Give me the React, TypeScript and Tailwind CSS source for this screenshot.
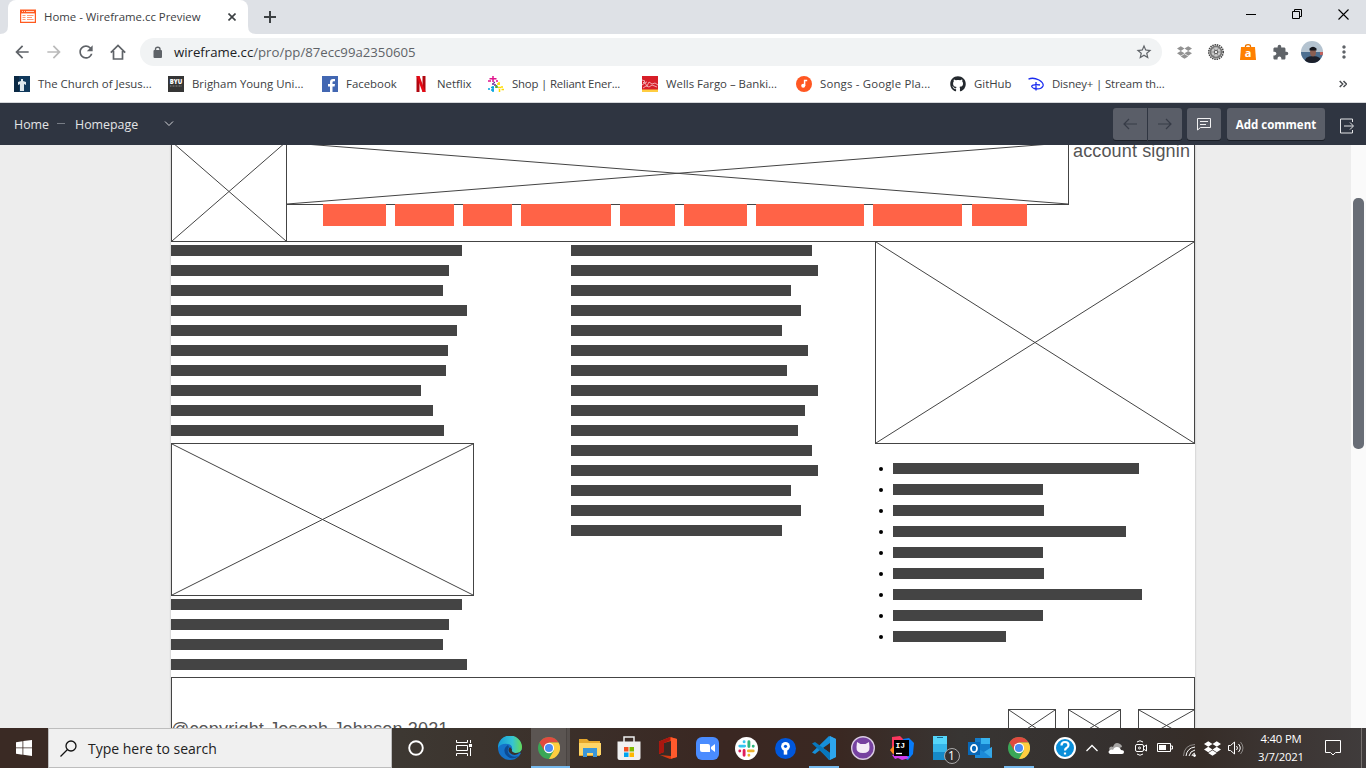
import React from "react";
import { FaDropbox, FaGithub } from "react-icons/fa";
import { MdArrowBack, MdArrowForward, MdRefresh, MdStarBorder, MdExtension, MdMoreVert } from "react-icons/md";

const UI = "font-['Open_Sans','Noto_Sans',sans-serif]";

function CrossBox({ className, top = 0 }: { className: string; top?: number }) {
  return (
    <div className={`border border-[#444] shrink-0 ${className}`}>
      <svg className="block w-full h-full" viewBox="0 0 100 100" preserveAspectRatio="none">
        <path d={`M0 ${top}L100 100M0 100L100 ${top}`} stroke="#444" strokeWidth="1" fill="none" vectorEffect="non-scaling-stroke" />
      </svg>
    </div>
  );
}

function Lines({ widths }: { widths: number[] }) {
  return (
    <div className="flex flex-col gap-[9px]">
      {widths.map((w, i) => (
        <div key={i} className="h-[11px] bg-[#444]" style={{ width: w }} />
      ))}
    </div>
  );
}

const firstLines = [291, 278, 272, 296, 286, 277, 275, 250, 262, 273];
const secondLines = [241, 247, 220, 230, 211, 237, 216, 247, 234, 227, 241, 247, 220, 230, 211];
const bullets = [246, 150, 151, 233, 150, 151, 249, 150, 113];
const nav = [[323, 386], [395, 454], [463, 512], [521, 611], [620, 675], [684, 747], [756, 864], [873, 962], [972, 1027]];

function Wireframe() {
  return (
    <div className="flex h-[583px] bg-[#ededed] overflow-hidden">
      <div className="w-[171px] shrink-0" />
      <div className="w-[1024px] h-[583px] shrink-0 bg-white overflow-hidden shadow-[0_0_2px_rgba(0,0,0,0.25)] font-['Liberation_Sans',Arial,sans-serif] text-[18px] text-[#555]">
        <div className="-mt-1 h-[101px] border-x border-b border-[#444] flex">
          <CrossBox className="-ml-px w-[116px] h-[101px]" />
          <div className="w-[782px] shrink-0">
            <CrossBox className="-ml-px w-[783px] h-[64px]" top={1} />
            <div className="flex pl-[36px] -mt-px">
              {nav.map(([a, b], i) => (
                <div key={i} className="h-[22px] bg-[#ff6347] shrink-0 relative" style={{ width: b - a, marginLeft: i ? a - nav[i - 1][1] : 0 }} />
              ))}
            </div>
          </div>
          <div className="pl-1 whitespace-nowrap leading-[20px] tracking-[0.14px]">account signin</div>
        </div>
        <div className="flex h-[435px]">
          <div className="w-[400px] pt-[3px]">
            <Lines widths={firstLines} />
            <CrossBox className="w-[303px] h-[153px] mt-[7px] mb-[3px]" />
            <Lines widths={firstLines.slice(0, 4)} />
          </div>
          <div className="w-[304px] pt-[3px]"><Lines widths={secondLines} /></div>
          <div className="w-[320px]">
            <CrossBox className="-mt-px w-[320px] h-[203px]" />
            <ul className="mt-[19px] pl-[4px] flex flex-col gap-[10px]">
              {bullets.map((w, i) => (
                <li key={i} className="flex items-center gap-[10px] h-[11px]">
                  <span className="size-[4px] mt-px rounded-full bg-black" />
                  <span className="h-[11px] bg-[#444]" style={{ width: w }} />
                </li>
              ))}
            </ul>
          </div>
        </div>
        <div className="h-[100px] border border-[#444] flex items-start">
          <div className="w-[836px] pt-[41px] leading-[20px] whitespace-nowrap tracking-[0.17px] -indent-px">@copyright Joseph Johnson 2021</div>
          <div className="flex pt-[31px] -mr-px">
            <CrossBox className="w-[48px] h-[33px] mr-3" />
            <CrossBox className="w-[53px] h-[33px] mr-[17px]" />
            <CrossBox className="w-[57px] h-[33px]" />
          </div>
        </div>
      </div>
      <div className="w-[156px] shrink-0" />
      <div className="w-[15px] bg-[#fafafa] shrink-0 pl-[2px] pt-[53px]">
        <div className="w-[11px] h-[251px] rounded-[5px] bg-[#686d76]" />
      </div>
    </div>
  );
}

function TabStrip() {
  return (
    <div className="h-[34px] bg-[#dee1e6] flex items-end">
      <svg width="8" height="8"><path d="M0 8Q8 8 8 0V8Z" fill="#fff" /></svg>
      <div className="w-[240px] h-[34px] bg-white rounded-t-[8px] flex items-center pl-3">
        <svg width="16" height="16" viewBox="0 0 16 16">
          <path d="M.6 1h14.800v12.400H.6Z" fill="#fff" stroke="#ff5a1f" strokeWidth="1.200" />
          <path d="M0 1h16v3.400H0Z" fill="#ff5a1f" />
          <path d="M2 2.500h1M4 2.500h1M6 2.500h8" stroke="#ffd5c5" />
          <path d="M2.500 6.500h3M7 6.500h6.500M2.500 8.500h3M7 8.500h5M2.500 10.500h3M7 10.500h6.500" stroke="#ff9c77" />
        </svg>
        <span className="ml-2 w-[157px] whitespace-nowrap text-[11.400px] text-[#3c4043]">Home - Wireframe.cc Preview</span>
        <svg className="ml-[27px]" width="8" height="8"><path d="M.5.5l7 7M7.500.5l-7 7" stroke="#3c4043" strokeWidth="1.600" /></svg>
      </div>
      <svg width="8" height="8"><path d="M8 8Q0 8 0 0V8Z" fill="#fff" /></svg>
      <svg className="ml-2 mb-[11px]" width="12" height="12"><path d="M6 0v12M0 6h12" stroke="#3c4043" strokeWidth="2" /></svg>
      <svg className="ml-auto mb-[14px]" width="10" height="10"><path d="M0 4.500h10" stroke="#000" /></svg>
      <svg className="ml-9 mb-[14px]" width="11" height="11" fill="none" stroke="#000"><path d="M.5 2.500h7v7h-7zM2.500 2V.5h7v7H8" /></svg>
      <svg className="ml-[35px] mb-[14px] mr-[17px]" width="11" height="11"><path d="M.5.5l10 10M10.500.5l-10 10" stroke="#000" strokeWidth="1.100" /></svg>
    </div>
  );
}

function Toolbar() {
  return (
    <div className="h-[36px] flex items-center text-[#5f6368] pl-3">
      <MdArrowBack size={20} />
      <MdArrowForward size={20} className="ml-3 text-[#bababa]" />
      <MdRefresh size={20} className="ml-3" />
      <svg className="ml-[14px] mr-[3px]" width="16" height="16" fill="none" stroke="currentColor" strokeWidth="1.700"><path d="M.8 8.700L8 1.500l7.200 7.200M3.500 7v8h9V7" /></svg>
      <div className="ml-[11px] w-[1022px] h-7 rounded-full bg-[#f1f3f4] flex items-center pl-[13px]">
        <svg width="10" height="13" fill="none"><rect x=".5" y="4" width="8.500" height="8" rx="1" fill="#5f6368" /><path d="M2.500 5V3.200q0-2 2.250-2t2.250 2V5" stroke="#5f6368" strokeWidth="1.400" /></svg>
        <span className="ml-[11px] mt-px text-[13.200px] whitespace-nowrap"><span className="text-[#202124]">wireframe.cc</span>/pro/pp/87ecc99a2350605</span>
        <MdStarBorder size={18} className="ml-auto mr-[9px]" />
      </div>
      <FaDropbox size={15} className="ml-[15px] text-[#929292]" />
      <svg className="ml-4" width="16" height="16" viewBox="0 0 16 16" fill="none">
        <circle cx="8" cy="8" r="7.200" stroke="#444" strokeWidth="1.600" strokeDasharray="1.500 .8" />
        <circle cx="8" cy="8" r="5.600" fill="#ccc" stroke="#777" strokeWidth="1.800" />
        <path d="M3 8h10M5.500 4l5 8M10.500 4l-5 8" stroke="#888" strokeWidth=".8" />
        <circle cx="8" cy="8" r="1.800" fill="#eee" stroke="#555" />
      </svg>
      <svg className="ml-4" width="16" height="16" viewBox="0 0 16 16">
        <path d="M5.500 4V2.200q0-1.500 2.500-1.500t2.500 1.500V4" fill="none" stroke="#e87400" strokeWidth="1.300" />
        <path d="M1 3h14l1 13H0Z" fill="#ff8000" />
        <text x="8" y="12.700" textAnchor="middle" fontSize="11" fontWeight="700" fill="#fff">a</text>
      </svg>
      <MdExtension size={17} className="ml-4" />
      <svg className="ml-3" width="22" height="22" viewBox="0 0 22 22">
        <defs><clipPath id="avatar"><circle cx="11" cy="11" r="11" /></clipPath></defs>
        <g clipPath="url(#avatar)">
          <path d="M0 0h22v22H0z" fill="#b4c3d0" /><path d="M0 11h22v11H0z" fill="#4d6f91" />
          <path d="M4 22q-1-7 8-7t8 7" fill="#1c202b" /><ellipse cx="12" cy="11.500" rx="3" ry="4" fill="#8b5f52" />
          <path d="M8.500 9.500V7.500q3.500-3.500 7 0V9.500z" fill="#14151b" /><path d="M19 11h3v3h-3z" fill="#c4605b" />
        </g>
      </svg>
      <MdMoreVert size={20} className="ml-[11px]" />
    </div>
  );
}

function Mark({ label, icon, className }: { label: string; icon: React.ReactNode; className: string }) {
  return (
    <div className={`flex items-center shrink-0 ${className}`}>
      <svg width="16" height="16" viewBox="0 0 16 16" className="shrink-0">{icon}</svg>
      <span className="ml-2 whitespace-nowrap">{label}</span>
    </div>
  );
}

function Bookmarks() {
  return (
    <div className="h-[33px] border-b border-[#d5d7da] flex items-center pl-[14px] pb-[4px] text-[11.400px] leading-[16px] text-[#3c4043]">
      <Mark className="w-[154px]" label="The Church of Jesus..." icon={<><path d="M0 0h16v16H0z" fill="#11395c" /><path d="M0 0h5v16H0z" fill="#0b2944" /><path d="M7 3h2v2l3 1v3l-2-1v7H6V8L4 9V6l3-1z" fill="#dfe8ee" /></>} />
      <Mark className="w-[154px]" label="Brigham Young Uni..." icon={<><path d="M0 0h16v16H0z" fill="#353535" /><text x="8" y="8" textAnchor="middle" fontSize="6" fontWeight="800" fill="#fff">BYU</text><path d="M2 10h12" stroke="#888" strokeDasharray="1 .5" /></>} />
      <Mark className="w-[91px]" label="Facebook" icon={<><path d="M0 0h16v16H0z" fill="#4267b2" /><path d="M8 16v-5.500H6V8h2V6q0-3 3-3h2v2.300h-1.300q-1.200 0-1.200 1.200V8H13l-.4 2.500h-2.100V16z" fill="#fff" /></>} />
      <Mark className="w-[75px]" label="Netflix" icon={<><path d="M3.500 0h3v16h-3zM9.500 0h3v16h-3z" fill="#b1060f" /><path d="M3.500 0h3l6 16h-3z" fill="#e50914" /></>} />
      <Mark className="w-[154px] tracking-[-0.18px]" label="Shop | Reliant Ener..." icon={<g strokeWidth="1.500"><path d="M5 0v6M1.500 2.700h7M0 5h3M8 5h2" stroke="#e0148c" /><path d="M4 8h2M5.500 6.500h1.500M6 9h2" stroke="#6a2a9b" /><path d="M0 13h2M3 11.500h3M3 14h3M5 10v6" stroke="#00a3e0" /><path d="M11 6v3M9 8h3M10 11.500h3M13.500 13.500H16M11.500 13v3M14 10v2" stroke="#ffdc00" /><path d="M7 11h3M8.500 9v3" stroke="#56ab3d" /></g>} />
      <Mark className="w-[154px]" label="Wells Fargo – Banki..." icon={<><path d="M0 0h16v16H0z" fill="#d71e28" /><path d="M0 13.500h16V16H0z" fill="#ffcd41" /><path d="M0 4l3 1-2 2 4-1M0 9l3-2 2 3 2-4 3 2 3-1 3 2M1 12l3-2 3 1 3-2 5 2" stroke="#f6c8ca" fill="none" strokeWidth=".8" /></>} />
      <Mark className="w-[154px] tracking-[0.18px]" label="Songs - Google Pla..." icon={<><circle cx="8" cy="8" r="8" fill="#ff5722" /><circle cx="7.200" cy="9.800" r="2" fill="#fff" /><path d="M8.600 10V4.500h2.600" stroke="#fff" strokeWidth="1.500" fill="none" /></>} />
      <div className="flex items-center w-[78px]"><FaGithub size={16} color="#24292e" /><span className="ml-2">GitHub</span></div>
      <Mark className="tracking-[-0.14px]" label="Disney+ | Stream th..." icon={<path d="M.5 3.200Q5 1 11 4Q16 7 15 10Q13 14 6 12.500Q2 10.500 5 9.200Q8 8.300 12 9M8 6v8.500" stroke="#1a2cf0" strokeWidth="1.300" fill="none" />} />
      <svg className="ml-auto mr-[19px]" width="8" height="8" fill="none" stroke="#4a4d51" strokeWidth="1.500"><path d="M.7 1l3 3-3 3M4.500 1l3 3-3 3" /></svg>
    </div>
  );
}

function PreviewBar() {
  const btn = "h-[32px] bg-[#5a5e68] flex items-center justify-center shadow-[0_1px_0_#1b1f27]";
  return (
    <div className="h-[42px] bg-[#2f3541] flex items-center pl-[14px] text-[12.400px] text-[#e3e4e6]">
      <span className="w-[35px] mt-[2px] whitespace-nowrap">Home</span>
      <span className="ml-2 mb-[2px] w-2 h-px bg-[#777c85]" />
      <span className="ml-[10px] mt-[2px] w-[64px] whitespace-nowrap">Homepage</span>
      <svg className="ml-[25px]" width="10" height="6" fill="none" stroke="#d5d6d9"><path d="M1 .5l4 4 4-4" /></svg>
      <div className={`${btn} ml-auto w-[34px] rounded-l-[3px]`}><svg width="14" height="12" fill="none" stroke="#373c47" strokeWidth="1.200"><path d="M14 6H1M6 1L1 6l5 5" /></svg></div>
      <div className={`${btn} ml-px w-[34px] rounded-r-[3px]`}><svg width="14" height="12" fill="none" stroke="#373c47" strokeWidth="1.200"><path d="M0 6h13M8 1l5 5-5 5" /></svg></div>
      <div className={`${btn} ml-[5px] w-[34px] rounded-[3px]`}><svg width="14" height="14" fill="none" stroke="#f1f1f2"><path d="M.5 1.500h13v9h-10l-3 2.500zM3 4.500h8M3 7.500h6" /></svg></div>
      <div className={`${btn} ml-[6px] w-[98px] pt-[2px] rounded-[3px] font-bold text-white text-[11.500px] whitespace-nowrap`}>Add comment</div>
      <svg className="ml-[15px] mr-[12px] mt-[3px]" width="14" height="16" fill="none" stroke="#e3e4e6"><path d="M12.500 4V1H.5v14h12v-3M4 8h9M10 4.500L13.500 8 10 11.500" /></svg>
    </div>
  );
}

const Chrome = () => (
  <svg width="22" height="22" viewBox="0 0 24 24">
    <circle cx="12" cy="12" r="12" fill="#3aa757" />
    <path d="M12 12L1.600 6A12 12 0 0 1 22.400 6H12z" fill="#e04a3f" />
    <path d="M12 6h10.400A12 12 0 0 1 12 24l5.200-9z" fill="#ffcd40" />
    <path d="M1.600 6L7 15l5-3V6z" fill="#e04a3f" />
    <circle cx="12" cy="12" r="5.600" fill="#fff" /><circle cx="12" cy="12" r="4.400" fill="#4c8bf5" />
  </svg>
);

function App24({ children, size = 24 }: { children: React.ReactNode; size?: number }) {
  return <svg width={size} height={size} viewBox="0 0 24 24">{children}</svg>;
}

function Slot({ children, active, underline }: { children: React.ReactNode; active?: boolean; underline?: boolean }) {
  return (
    <div className={`w-[39px] h-[40px] shrink-0 flex flex-col items-center ${active ? "ml-[2px] mr-[0.5px] bg-[linear-gradient(90deg,#5b5552_35px,#3d3836_35px,#56504d_36px)]" : ""}`}>
      <div className={`h-[38px] pt-[2px] flex items-center justify-center ${active ? "pr-[3px]" : ""}`}>{children}</div>
      {underline && <div className={`h-[2px] bg-[#76b9ed] ${active ? "w-[39px]" : "w-[30px]"}`} />}
    </div>
  );
}

function Taskbar() {
  return (
    <div className="h-[40px] flex items-center text-white bg-[linear-gradient(90deg,#3a2a24_0px,#3a2a24_48px,#3d3832_400px,#3b302a_560px,#3a2722_720px,#3a2822_840px,#383533_960px,#35302e_1120px,#362d28_1200px,#3c3533_1280px,#403c3c_1366px)]">
      <div className="w-[48px] shrink-0 flex justify-center"><svg width="16" height="16" fill="#fff"><path d="M0 2.200l6.500-1v6.300H0zM7.300 1L16 0v7.500H7.300zM0 8.300h6.500v6.400L0 13.800zM7.300 8.300H16V16l-8.700-1.200z" /></svg></div>
      <div className="w-[344px] h-[40px] border border-[#bdbdbd] bg-[#f0f0f0] shrink-0 flex items-center pl-[11px] text-[#222]">
        <svg width="17" height="17" fill="none" stroke="#111" strokeWidth="1.300"><circle cx="11" cy="6" r="5" /><path d="M7.500 9.500L.5 16.500" /></svg>
        <span className="ml-[11px] mt-px text-[14px] whitespace-nowrap">Type here to search</span>
      </div>
      <div className="w-[48px] shrink-0 flex justify-center"><svg width="16" height="16"><circle cx="8" cy="8" r="6.800" fill="none" stroke="#fff" strokeWidth="1.900" /></svg></div>
      <div className="w-[47px] shrink-0 flex justify-center"><svg className="ml-px" width="17" height="16" fill="none" stroke="#fff"><path d="M.5 0v2.500h11V0M.5 5.500h11v5H.5zM.5 16v-2.500h11V16M14.500 0v3M14.500 8v8" /><path d="M13 4h3v3h-3z" fill="#fff" stroke="none" /></svg></div>
      <div className="w-[3px] shrink-0" />
      <Slot><App24><defs><linearGradient id="edge" x1="0" x2="1"><stop stopColor="#159bd8" /><stop offset=".6" stopColor="#35c4d3" /><stop offset="1" stopColor="#66dc53" /></linearGradient></defs>
        <circle cx="12" cy="12" r="12" fill="#1572c8" /><path d="M0 12A12 12 0 0 1 24 11q0 6-6 6-5 0-4-3 1-5-4-6Q3 7 0 12z" fill="url(#edge)" /><path d="M10 9q-6 4-2 10 5 6 13 1-6 2-9-1-4-4-1-8z" fill="#0c4b94" /><path d="M12 11q-3 3 0 6 5 4 10-.5l2 1v-4q-2 4-7 3.500-4-1-3-3.500z" fill="#39302c" /></App24></Slot>
      <Slot active underline><Chrome /></Slot>
      <Slot><App24><path d="M1 3h8l2 2h11v15H1z" fill="#e6a72c" /><path d="M1 7h22v12H1z" fill="#ffd567" /><path d="M5 12h14v9h-4v-4H9v4H5z" fill="#3b96d8" /></App24></Slot>
      <Slot><App24><path d="M7 6V1h10v5" fill="none" stroke="#eee" strokeWidth="1.500" /><path d="M.5 5.500h23V22q0 2-2 2h-19q-2 0-2-2z" fill="#f1f1f1" /><path d="M7 11h4.500v4.500H7z" fill="#f25022" /><path d="M12.500 11H17v4.500h-4.500z" fill="#7fba00" /><path d="M7 16.500h4.500V21H7z" fill="#00a4ef" /><path d="M12.500 16.500H17V21h-4.500z" fill="#ffb900" /></App24></Slot>
      <Slot><App24><path d="M3 5.500L14 1l7 2v18l-7 2-10-4 11 1V5L8 7v9l-5 2z" fill="#d83b12" /><path d="M15 1.300l6 1.700v18l-6 1.800z" fill="#ff5a2c" /><path d="M3 5.500L14 1v3.500L8 7v9l-5 2z" fill="#a91710" /></App24></Slot>
      <Slot><App24><rect x="1" y="1" width="23" height="23" rx="6" fill="#4a8cff" /><path d="M5 8h8q2 0 2 2v6H7q-2 0-2-2zM16 11l4-3v8l-4-3z" fill="#fff" /></App24></Slot>
      <Slot><App24 size={23}><circle cx="12" cy="12" r="12" fill="#fff" /><g strokeWidth="3" strokeLinecap="round"><path d="M5 9.500h5M9.500 5v.1" stroke="#36c5f0" /><path d="M14.500 5v5M19 9.500v.1" stroke="#2eb67d" /><path d="M14 14.500h5M14.500 19v.1" stroke="#ecb22e" /><path d="M9.500 14v5M5 14.500v.1" stroke="#e01e5a" /></g></App24></Slot>
      <Slot><App24 size={21}><circle cx="12" cy="12" r="12" fill="#0057dc" /><circle cx="12" cy="9.500" r="5" fill="#fff" /><path d="M10 13h4v6h-4z" fill="#fff" /><circle cx="12" cy="9.500" r="1.800" fill="#0057dc" /></App24></Slot>
      <Slot underline><App24><path d="M17 0l7 3v18l-7 3L8 14l-5 4-3-1.500L17 0zM18 7l-7 5 7 5z" fillRule="evenodd" fill="#168fda" /><path d="M0 7.500L3 6l15 11v7L0 7.500z" fill="#0877bc" /><path d="M18 0l6 3v18l-6 3z" fill="#2da5ed" /></App24></Slot>
      <Slot><App24><circle cx="12" cy="12" r="11.300" fill="#7642a0" stroke="#d9cbe2" strokeWidth="1.400" /><path d="M6 6l3.500 2h5L18 6l.5 5q.5 6-6.500 6t-6.500-6z" fill="#f4edf7" /></App24></Slot>
      <Slot><App24><path d="M2 1l8-1 5 5-2 7H2z" fill="#fb375e" /><path d="M0 14l8-9 1 12-6 1z" fill="#ff8b24" /><path d="M13 3l6-1 5 5-1 11-5 6-7-3z" fill="#087cfa" /><path d="M2 19l10-3 7 6-7 2-4-2-3 1z" fill="#d13cf0" /><path d="M4 4h15v16H4z" fill="#000" /><text x="5.500" y="12" fontSize="8" fontWeight="700" fontFamily="Liberation Mono" fill="#fff">IJ</text><path d="M6 17.500h6" stroke="#fff" strokeWidth="1.300" /></App24></Slot>
      <Slot><div className="flex items-end w-[26px] h-[28px] mt-[3px] ml-[9px] relative"><svg width="15" height="24" className="mb-1"><rect width="14" height="24" fill="#36b5e8" /><path d="M0 0h14v8H0z" fill="#55d6fa" /><path d="M0 16h14v8H0z" fill="#168ac8" /><path d="M4 1.500h6" stroke="#17678f" /></svg><span className="absolute right-[-1px] bottom-0 size-[16px] rounded-full border border-[#aaa] bg-[#343130] text-[12px] leading-[14px] text-center">1</span></div></Slot>
      <Slot><App24><path d="M7 2h15v18H7z" fill="#147cc9" /><path d="M13 2h9v6h-9z" fill="#38b4ef" /><path d="M7 11l9 5 8-5v10q0 1-1 1H7z" fill="#1c8ad8" /><path d="M16 16l8 6V11z" fill="#36a9e8" /><path d="M0 6h12v13H0z" fill="#0868b7" /><ellipse cx="6" cy="12.500" rx="3" ry="3.600" fill="none" stroke="#fff" strokeWidth="1.800" /></App24></Slot>
      <Slot underline><Chrome /></Slot>
      <div className="flex items-center ml-[15.500px]">
        <svg width="22" height="22" viewBox="0 0 22 22"><circle cx="11" cy="11" r="10" fill="#0a8fda" stroke="#fff" strokeWidth="2" /><path d="M7.500 8.500Q7.500 5 11 5t3.500 3q0 2-2 3-1.500 1-1.500 2.500M11 15.500v2" fill="none" stroke="#fff" strokeWidth="2.200" /></svg>
        <svg className="ml-[10px]" width="12" height="8" fill="none" stroke="#fff" strokeWidth="1.300"><path d="M.5 7L6 1.500 11.500 7" /></svg>
        <svg className="ml-[10px]" width="16" height="11"><path d="M3 8Q0 7 2 4q2-1 3 0 2-6 7-3 2 1 2 3z" fill="#a7a5a4" /><path d="M2 11Q-1 9 2 7q2-1 3 0 1-3 4-3 3 0 4 3 3 0 3 2t-2 2z" fill="#fff" /></svg>
        <svg className="ml-[11px]" width="12" height="16" fill="none" stroke="#fff"><rect x=".5" y="4.500" width="8" height="7" rx="1.500" /><path d="M8.500 7l3-2v6l-3-2M2 2q3-2.500 6 0M2 14q3 2.500 6 0" /><circle cx="4.500" cy="8" r="1" /></svg>
        <svg className="ml-[10px]" width="16" height="10"><path d="M.5.5h13v8H.5zM14 3h1.500v3H14" fill="none" stroke="#fff" /><path d="M2 2h7v5H2z" fill="#fff" /></svg>
        <svg className="ml-[10px] mt-1" width="14" height="13" fill="none" stroke="#fff"><path d="M3 12Q4 4 12 3M6 12q1-5 6-6M9 12q0-2 3-3" /><path d="M.5 12Q1 1 12 .5" stroke="#8b8785" /><circle cx="11.500" cy="11.500" r="1" fill="#fff" /></svg>
        <FaDropbox size={17} className="ml-[7px]" />
        <svg className="ml-[7px]" width="16" height="14" fill="none" stroke="#fff"><path d="M.5 4.500h2l4-3.500v12l-4-3.500h-2zM8.500 5q2 2 0 4M10.500 3q3.500 4 0 8" /><path d="M12.500 1q5 6 0 12" stroke="#8c8886" /></svg>
      </div>
      <div className="ml-auto w-[48px] text-center text-[11.300px] leading-[18px] tracking-[-0.15px] whitespace-nowrap"><div>4:40 PM</div><div>3/7/2021</div></div>
      <svg className="ml-5 mr-[20px] shrink-0" width="16" height="16" fill="none" stroke="#fff"><path d="M.5.5h15v12h-5L8 15l-2.500-2.500h-5z" /></svg>
      <div className="mr-[4px] w-px h-[40px] bg-[#777270]" />
    </div>
  );
}

export default function App() {
  return (
    <div className={`w-[1366px] h-[768px] overflow-hidden bg-white flex flex-col ${UI}`}>
      <TabStrip />
      <Toolbar />
      <Bookmarks />
      <PreviewBar />
      <Wireframe />
      <Taskbar />
    </div>
  );
}
